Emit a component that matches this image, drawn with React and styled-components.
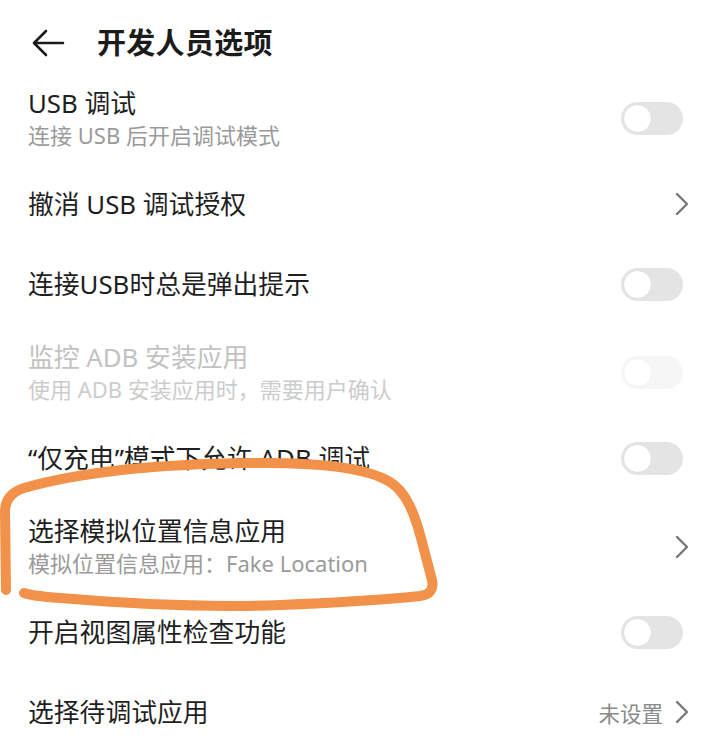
import React from 'react'
import styled, { createGlobalStyle } from 'styled-components'

const GlobalStyle = createGlobalStyle`
  html, body {
    margin: 0;
    padding: 0;
    background: #ffffff;
  }
  body {
    font-family: "Noto Sans", "Noto Sans CJK SC", sans-serif;
  }
`

const Page = styled.div`
  position: relative;
  width: 718px;
  height: 748px;
  overflow: hidden;
  background: #ffffff;
`

const Header = styled.div`
  height: 70px;
  box-sizing: border-box;
  padding: 16px 0 0 32px;
  display: flex;
  align-items: center;
  gap: 32px;
`

const BackButton = styled.div`
  width: 33px;
  height: 28px;
  display: flex;
  align-items: center;
`

const Title = styled.h1`
  margin: 0;
  font-size: 29px;
  line-height: 36px;
  font-weight: 700;
  color: #1b1b1b;
  letter-spacing: 0.3px;
`

const List = styled.div`
  display: flex;
  flex-direction: column;
`

const Row = styled.div`
  min-height: ${p => (p.$sub ? 94 : 80)}px;
  box-sizing: border-box;
  padding: ${p => (p.$sub ? '3px' : '0')} 29px 0 28px;
  display: flex;
  align-items: center;
  justify-content: space-between;
`

const TextBlock = styled.div`
  display: flex;
  flex-direction: column;
  gap: 1px;
`

const RowTitle = styled.div`
  font-size: 25.8px;
  line-height: 32px;
  color: ${p => (p.$disabled ? '#c2c2c2' : '#1f1f1f')};
  white-space: nowrap;
`

const RowSub = styled.div`
  font-size: 22px;
  line-height: 30px;
  color: ${p => (p.$disabled ? '#cccccc' : '#9a9a9a')};
  white-space: nowrap;
`

const Trailing = styled.div`
  display: flex;
  align-items: center;
  gap: 12px;
`

const Value = styled.span`
  font-size: 21.5px;
  color: #8a8a8a;
`

const Track = styled.div`
  width: 62px;
  height: 33px;
  margin-right: 6px;
  border-radius: 17px;
  background: ${p => (p.$disabled ? '#f6f6f6' : '#e4e4e4')};
  display: flex;
  align-items: center;
  padding-left: 2px;
  box-sizing: border-box;
`

const Knob = styled.div`
  width: 29px;
  height: 29px;
  border-radius: 50%;
  background: #ffffff;
  box-sizing: border-box;
  border: 1.5px solid ${p => (p.$disabled ? '#f2f2f2' : '#dedede')};
`

const Overlay = styled.svg`
  position: absolute;
  left: 0;
  top: 0;
  pointer-events: none;
`

const Switch = ({ disabled }) => (
  <Track $disabled={disabled}>
    <Knob $disabled={disabled} />
  </Track>
)

const Chevron = () => (
  <svg width="14" height="24" viewBox="0 0 14 24">
    <path d="M2 2 L12 12 L2 22" fill="none" stroke="#777777" strokeWidth="2.4" strokeLinecap="round" strokeLinejoin="round" />
  </svg>
)

const items = [
  { title: 'USB 调试', sub: '连接 USB 后开启调试模式', kind: 'switch' },
  { title: '撤消 USB 调试授权', kind: 'arrow' },
  { title: '连接USB时总是弹出提示', kind: 'switch' },
  { title: '监控 ADB 安装应用', sub: '使用 ADB 安装应用时，需要用户确认', kind: 'switch', disabled: true },
  { title: '“仅充电”模式下允许 ADB 调试', kind: 'switch' },
  { title: '选择模拟位置信息应用', sub: '模拟位置信息应用：Fake Location', kind: 'arrow' },
  { title: '开启视图属性检查功能', kind: 'switch' },
  { title: '选择待调试应用', kind: 'arrow', value: '未设置' },
]

export default function App() {
  return (
    <Page>
      <GlobalStyle />
      <Header>
        <BackButton>
          <svg width="33" height="28" viewBox="0 0 33 28">
            <path d="M31 14 H2.5 M14 2 L2 14 L14 26" fill="none" stroke="#1b1b1b" strokeWidth="2.6" strokeLinecap="round" strokeLinejoin="round" />
          </svg>
        </BackButton>
        <Title>开发人员选项</Title>
      </Header>
      <List>
        {items.map(item => (
          <Row key={item.title} $sub={!!item.sub}>
            <TextBlock>
              <RowTitle $disabled={item.disabled}>{item.title}</RowTitle>
              {item.sub && <RowSub $disabled={item.disabled}>{item.sub}</RowSub>}
            </TextBlock>
            <Trailing>
              {item.value && <Value>{item.value}</Value>}
              {item.kind === 'switch' ? <Switch disabled={item.disabled} /> : <Chevron />}
            </Trailing>
          </Row>
        ))}
      </List>
      <Overlay width="718" height="748" viewBox="0 0 718 748">
        <path
          d="M6 590 L5 512 Q5 494 24 488 C80 472 160 464 250 463 C320 462 368 468 390 482 C406 492 414 512 421 538 L432 580 Q435 594 420 596 C380 600 330 603 280 605 C200 608 120 603 60 598 Q32 596 24 593"
          fill="none"
          stroke="#f2914a"
          strokeWidth="10"
          strokeLinecap="round"
          strokeLinejoin="round"
        />
      </Overlay>
    </Page>
  )
}
